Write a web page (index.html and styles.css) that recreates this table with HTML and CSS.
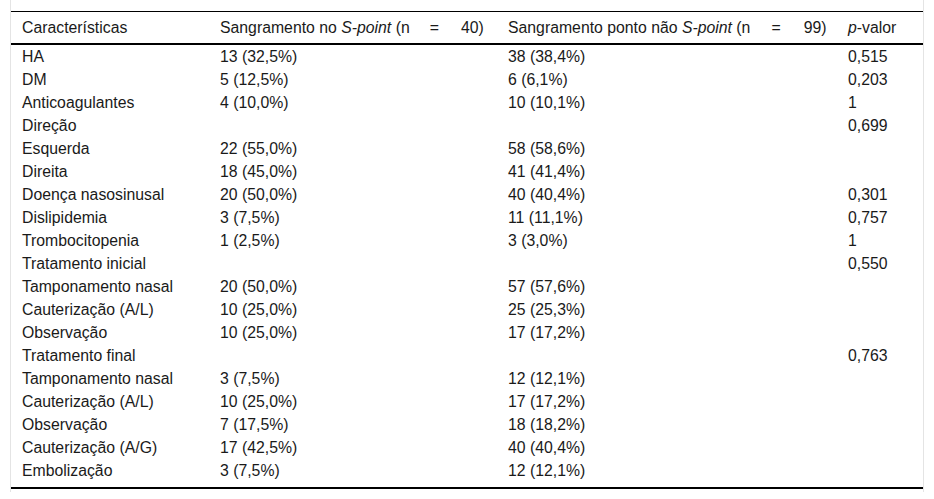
FILE: index.html
```html
<!DOCTYPE html>
<html lang="pt">
<head>
<meta charset="utf-8">
<title>Tabela</title>
<link rel="stylesheet" href="styles.css">
</head>
<body>
<div class="wrap">
<table class="tbl">
<thead>
<tr>
<th class="c1">Características</th>
<th class="c2">Sangramento no <i>S-point</i> (n<span class="eq">=</span>40)</th>
<th class="c3">Sangramento ponto não <i>S-point</i> (n<span class="eq">=</span>99)</th>
<th class="c4"><i>p</i>-valor</th>
</tr>
</thead>
<tbody>
<tr><td>HA</td><td>13 (32,5%)</td><td>38 (38,4%)</td><td>0,515</td></tr>
<tr><td>DM</td><td>5 (12,5%)</td><td>6 (6,1%)</td><td>0,203</td></tr>
<tr><td>Anticoagulantes</td><td>4 (10,0%)</td><td>10 (10,1%)</td><td>1</td></tr>
<tr><td>Direção</td><td></td><td></td><td>0,699</td></tr>
<tr><td>Esquerda</td><td>22 (55,0%)</td><td>58 (58,6%)</td><td></td></tr>
<tr><td>Direita</td><td>18 (45,0%)</td><td>41 (41,4%)</td><td></td></tr>
<tr><td>Doença nasosinusal</td><td>20 (50,0%)</td><td>40 (40,4%)</td><td>0,301</td></tr>
<tr><td>Dislipidemia</td><td>3 (7,5%)</td><td>11 (11,1%)</td><td>0,757</td></tr>
<tr><td>Trombocitopenia</td><td>1 (2,5%)</td><td>3 (3,0%)</td><td>1</td></tr>
<tr><td>Tratamento inicial</td><td></td><td></td><td>0,550</td></tr>
<tr><td>Tamponamento nasal</td><td>20 (50,0%)</td><td>57 (57,6%)</td><td></td></tr>
<tr><td>Cauterização (A/L)</td><td>10 (25,0%)</td><td>25 (25,3%)</td><td></td></tr>
<tr><td>Observação</td><td>10 (25,0%)</td><td>17 (17,2%)</td><td></td></tr>
<tr><td>Tratamento final</td><td></td><td></td><td>0,763</td></tr>
<tr><td>Tamponamento nasal</td><td>3 (7,5%)</td><td>12 (12,1%)</td><td></td></tr>
<tr><td>Cauterização (A/L)</td><td>10 (25,0%)</td><td>17 (17,2%)</td><td></td></tr>
<tr><td>Observação</td><td>7 (17,5%)</td><td>18 (18,2%)</td><td></td></tr>
<tr><td>Cauterização (A/G)</td><td>17 (42,5%)</td><td>40 (40,4%)</td><td></td></tr>
<tr class="last"><td>Embolização</td><td>3 (7,5%)</td><td>12 (12,1%)</td><td></td></tr>
</tbody>
</table>
</div>
</body>
</html>
```
FILE: styles.css
```css
html, body {
  margin: 0;
  padding: 0;
  background: #fff;
}
body {
  font-family: "Liberation Sans", Arial, sans-serif;
  font-size: 15.8px;
  color: #1a1a1a;
}
.wrap {
  margin-left: 10px;
  width: 912px;
  border-left: 1px solid #e4e4e4;
  border-right: 1px solid #e4e4e4;
  padding-top: 11px;
  padding-bottom: 3px;
}
.tbl {
  width: 912px;
  border-collapse: collapse;
  table-layout: fixed;
  border-top: 1px solid #000;
  border-bottom: 2px solid #000;
}
.tbl th {
  font-weight: normal;
  text-align: left;
  height: 31px;
  padding: 0 0 0 11px;
  border-bottom: 2px solid #000;
  vertical-align: middle;
  white-space: nowrap;
}
.tbl td {
  height: 23px;
  padding: 0 0 0 11px;
  vertical-align: middle;
  white-space: nowrap;
  line-height: 17px;
}
.tbl tr.last td {
  height: 23px;
  padding-bottom: 5px;
}
.c1 { width: 187px; }
.c2 { width: 277px; }
.c3 { width: 329px; }
.c4 { width: 75px; }
.eq {
  display: inline-block;
  margin: 0 22px 0 20px;
}
.c3 .eq {
  margin-left: 21px;
  margin-right: 23px;
}
```
